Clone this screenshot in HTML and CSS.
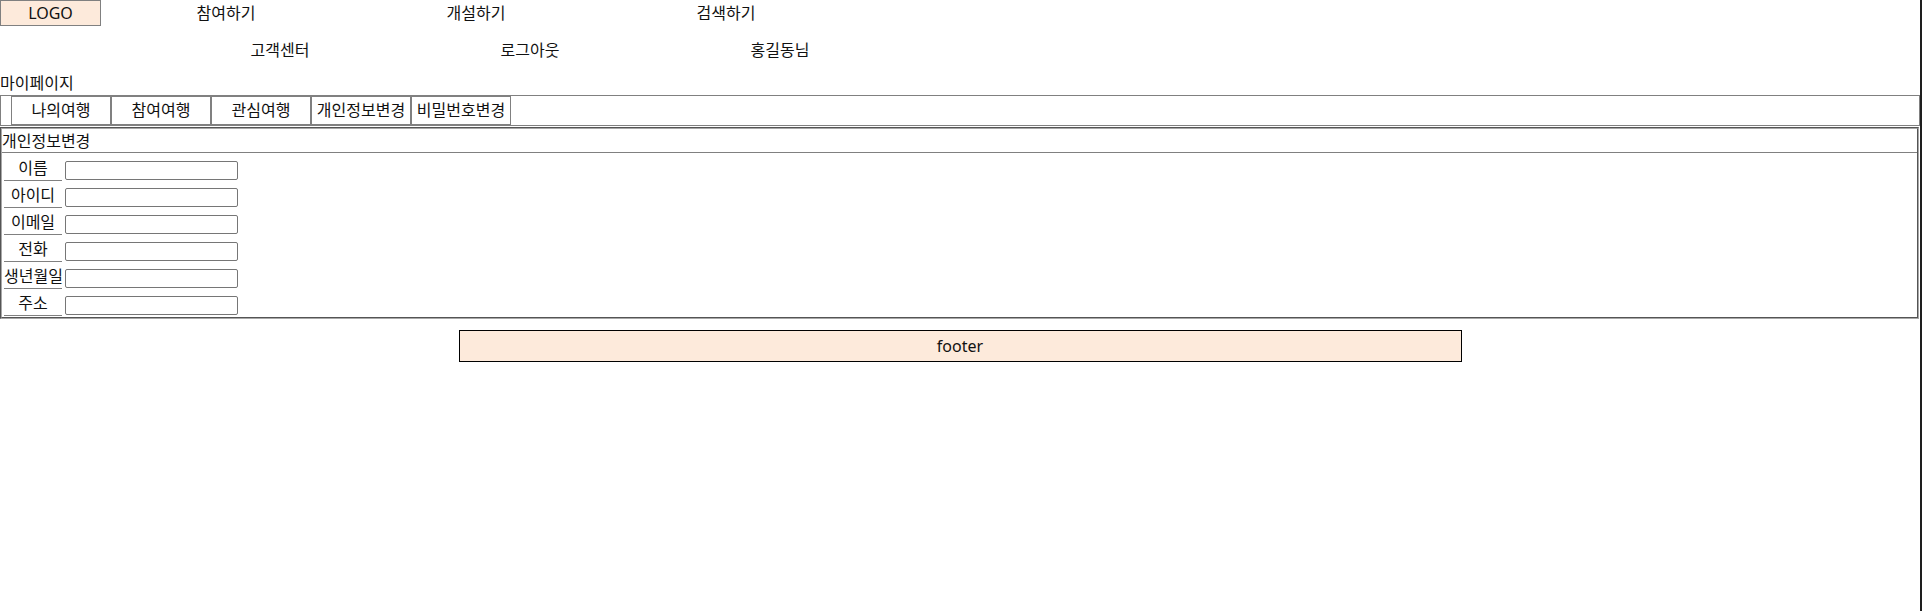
FILE: index.html
```html
<!DOCTYPE html>
<html lang="ko">
<head>
<meta charset="utf-8">
<title>마이페이지</title>
<link rel="stylesheet" href="styles.css">
</head>
<body>
<div class="page">
  <header class="site-header">
    <div class="nav-row">
      <div class="logo">LOGO</div>
      <div class="nav-item">참여하기</div>
      <div class="nav-item">개설하기</div>
      <div class="nav-item">검색하기</div>
    </div>
    <div class="nav-row nav-row-sub">
      <div class="nav-item">고객센터</div>
      <div class="nav-item">로그아웃</div>
      <div class="nav-item">홍길동님</div>
    </div>
  </header>
  <main>
    <div class="page-title">마이페이지</div>
    <div class="tabs">
      <div class="tab">나의여행</div>
      <div class="tab">참여여행</div>
      <div class="tab">관심여행</div>
      <div class="tab">개인정보변경</div>
      <div class="tab">비밀번호변경</div>
    </div>
    <section class="panel">
      <div class="panel-title">개인정보변경</div>
      <div class="form">
        <div class="form-row"><div class="label">이름</div><input class="field" type="text"></div>
        <div class="form-row"><div class="label">아이디</div><input class="field" type="text"></div>
        <div class="form-row"><div class="label">이메일</div><input class="field" type="text"></div>
        <div class="form-row"><div class="label">전화</div><input class="field" type="text"></div>
        <div class="form-row"><div class="label">생년월일</div><input class="field" type="text"></div>
        <div class="form-row"><div class="label">주소</div><input class="field" type="text"></div>
      </div>
    </section>
  </main>
  <footer class="footer">footer</footer>
</div>
</body>
</html>
```

FILE: styles.css
```css
html {
  background: #1e1e1e;
}
body {
  margin: 0;
}
.page {
  width: 1920px;
  min-height: 100vh;
  background: #ffffff;
  font-family: "Noto Sans", "Noto Sans CJK KR", sans-serif;
  font-size: 16px;
  color: #111;
  overflow: hidden;
}
.nav-row {
  display: flex;
  height: 26px;
}
.nav-row-sub {
  margin-top: 11px;
  padding-left: 155px;
}
.logo {
  width: 101px;
  box-sizing: border-box;
  border: 1px solid #808080;
  background: #fdeadb;
  text-align: center;
  line-height: 24px;
}
.nav-item {
  width: 250px;
  text-align: center;
  line-height: 26px;
}
.page-title {
  margin-top: 10px;
  line-height: 20px;
}
.tabs {
  margin-top: 2px;
  display: flex;
  height: 31px;
  box-sizing: border-box;
  border: 1px solid #808080;
  padding-left: 10px;
}
.tab {
  width: 100px;
  box-sizing: border-box;
  border: 1px solid #808080;
  text-align: center;
  line-height: 27px;
  white-space: nowrap;
}
.panel {
  margin: 1px 1px 0 0;
  border: 2px groove #a8a8a8;
}
.panel-title {
  padding-top: 1px;
  line-height: 22px;
  border-bottom: 1px solid #808080;
}
.form {
  display: flex;
  flex-direction: column;
  gap: 1px;
  padding: 2px 0 1px 2px;
}
.form-row {
  display: flex;
  height: 26px;
}
.label {
  width: 58px;
  box-sizing: border-box;
  padding-top: 1px;
  border-bottom: 1px solid #808080;
  text-align: center;
  line-height: 24px;
  white-space: nowrap;
}
.field {
  align-self: flex-end;
  margin: 0 0 1px 3px;
  width: 173px;
  height: 19px;
  box-sizing: border-box;
  padding: 0 2px;
  border: 1px solid #767676;
  border-radius: 2px;
  background: #fff;
}
.footer {
  width: 1003px;
  height: 32px;
  box-sizing: border-box;
  margin: 11px auto 0;
  border: 1px solid #000;
  background: #fdeadb;
  text-align: center;
  line-height: 30px;
}
```
